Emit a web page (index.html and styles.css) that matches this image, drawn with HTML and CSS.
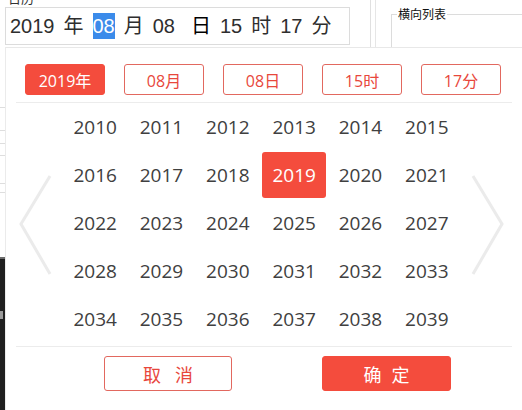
FILE: index.html
```html
<!DOCTYPE html>
<html lang="zh">
<head>
<meta charset="utf-8">
<title>日历</title>
<link rel="stylesheet" href="styles.css">
</head>
<body>
<div class="page">
  <div class="edge">
    <i class="ln l1"></i><i class="ln l2"></i><i class="ln l3"></i><i class="ln l4"></i><i class="ln l5"></i><i class="ln l6"></i>
    <div class="dark"><span class="dark-mark"></span></div>
  </div>
  <div class="form">
    <div class="label">日历</div>
    <div class="input">
      <span class="tok">2019</span><span class="tok">年</span><span class="tok sel">08</span><span class="tok">月</span><span class="tok">08</span><span class="tok dk">日</span><span class="tok">15</span><span class="tok">时</span><span class="tok">17</span><span class="tok">分</span>
    </div>
  </div>
  <div class="vlines"></div>
  <fieldset class="fs"><legend>横向列表</legend></fieldset>

  <div class="popup">
    <div class="tabs">
      <div class="tab on">2019年</div>
      <div class="tab">08月</div>
      <div class="tab">08日</div>
      <div class="tab">15时</div>
      <div class="tab">17分</div>
    </div>
    <div class="sep sep-top"></div>
    <div class="years">
      <div class="yr">2010</div><div class="yr">2011</div><div class="yr">2012</div><div class="yr">2013</div><div class="yr">2014</div><div class="yr">2015</div>
      <div class="yr">2016</div><div class="yr">2017</div><div class="yr">2018</div><div class="yr on">2019</div><div class="yr">2020</div><div class="yr">2021</div>
      <div class="yr">2022</div><div class="yr">2023</div><div class="yr">2024</div><div class="yr">2025</div><div class="yr">2026</div><div class="yr">2027</div>
      <div class="yr">2028</div><div class="yr">2029</div><div class="yr">2030</div><div class="yr">2031</div><div class="yr">2032</div><div class="yr">2033</div>
      <div class="yr">2034</div><div class="yr">2035</div><div class="yr">2036</div><div class="yr">2037</div><div class="yr">2038</div><div class="yr">2039</div>
    </div>
    <div class="sep sep-bottom"></div>
    <div class="actions">
      <div class="btn cancel">取 消</div>
      <div class="btn ok">确 定</div>
    </div>
    <svg class="arrow arrow-left" width="36" height="104" viewBox="0 0 36 104"><polyline points="32,2 3,50 32,100" fill="none" stroke="#ebebeb" stroke-width="3"/></svg>
    <svg class="arrow arrow-right" width="36" height="104" viewBox="0 0 36 104"><polyline points="3,2 32,50 3,100" fill="none" stroke="#ebebeb" stroke-width="3"/></svg>
  </div>
</div>
</body>
</html>
```
FILE: styles.css
```css
body {
  margin: 0;
  background: #fff;
  font-family: "Open Sans", "Noto Sans CJK SC", sans-serif;
}

.page {
  position: relative;
  display: flex;
  align-items: flex-start;
  width: 522px;
  height: 410px;
  overflow: hidden;
}

/* left page edge */
.edge {
  width: 5px;
  flex: none;
  height: 410px;
  display: flex;
  flex-direction: column;
}
.ln {
  display: block;
  height: 1px;
  background: #dedede;
}
.l1 { margin-top: 107px; }
.l2 { margin-top: 22px; }
.l3 { margin-top: 12px; }
.l4 { margin-top: 11px; }
.l5 { margin-top: 27px; }
.l6 { margin-top: 8px; }
.dark {
  flex: 1;
  margin-top: 64px;
  background: #1f1f1f;
  border-top: 2px solid #6a6a6a;
  display: flex;
  flex-direction: column;
}
.dark-mark {
  display: block;
  margin-top: 52px;
  height: 8px;
  width: 3px;
  background: #9a9a9a;
}

/* form */
.form {
  width: 345px;
  flex: none;
}
.label {
  font-family: "Noto Sans CJK SC", sans-serif;
  font-size: 13px;
  line-height: 13px;
  height: 13px;
  margin-top: -9px;
  padding-left: 3px;
  color: #333;
}
.input {
  margin-top: 3px;
  height: 36px;
  border: 1px solid #dcdcdc;
  display: flex;
  align-items: center;
  gap: 9px;
  padding-left: 4px;
  font-family: "Liberation Sans", "Noto Sans CJK SC", sans-serif;
  font-size: 20px;
  color: #2e2e2e;
}
.tok {
  line-height: 26px;
}
.sel {
  background: #3b8bea;
  color: #fff;
}
.dk {
  color: #000;
  margin-left: 7px;
}

.vlines {
  flex: none;
  width: 4px;
  height: 47px;
  margin-left: 20px;
  border-left: 1px solid #e0e0e0;
  border-right: 1px solid #e6e6e6;
}

.fs {
  flex: none;
  margin: 6px 0 0 15px;
  padding: 0 0 0 5px;
  border: 1px solid #dcdcdc;
  width: 140px;
  height: 60px;
  min-width: 0;
}
.fs legend {
  padding: 0 1px;
  font-family: "Noto Sans CJK SC", sans-serif;
  font-size: 12px;
  line-height: 16px;
  color: #111;
}

/* popup */
.popup {
  position: absolute;
  left: 5px;
  top: 47px;
  width: 530px;
  height: 380px;
  background: #fff;
  border-top: 1px solid #e8e8e8;
  border-left: 1px solid #ebebeb;
}
.tabs {
  display: flex;
  gap: 19px;
  margin: 16px 0 0 19px;
}
.tab {
  width: 80px;
  height: 31px;
  box-sizing: border-box;
  border: 1px solid #e2685f;
  border-radius: 3px;
  color: #e8473c;
  font-size: 16px;
  display: flex;
  align-items: center;
  justify-content: center;
}
.tab.on {
  background: #f44c3d;
  border-color: #f44c3d;
  color: #fff;
}
.sep {
  width: 496px;
  height: 1px;
  margin-left: 10px;
  background: #ececec;
}
.sep-top { margin-top: 7px; }
.sep-bottom { margin-top: 3px; }

.years {
  display: grid;
  grid-template-columns: repeat(6, 1fr);
  grid-auto-rows: 48px;
  width: 398px;
  margin: 0 0 0 56px;
}
.yr {
  display: flex;
  align-items: center;
  justify-content: center;
  margin: 1px;
  border-radius: 3px;
  font-size: 19px;
  color: #404040;
}
.yr.on {
  background: #f44c3d;
  color: #fff;
}

.actions {
  display: flex;
  gap: 90px;
  margin: 9px 0 0 98px;
}
.btn {
  width: 128px;
  height: 35px;
  box-sizing: border-box;
  border: 1px solid #e2685f;
  border-radius: 3px;
  color: #e8473c;
  font-family: "Noto Sans CJK SC", sans-serif;
  font-size: 18px;
  letter-spacing: 5px;
  padding-left: 5px;
  display: flex;
  align-items: center;
  justify-content: center;
}
.btn.ok {
  width: 129px;
  background: #f44c3d;
  border-color: #f44c3d;
  color: #fff;
  letter-spacing: 3px;
  padding-left: 3px;
}

.arrow {
  position: absolute;
  top: 126px;
}
.arrow-left { left: 12px; }
.arrow-right { left: 464px; }
```
